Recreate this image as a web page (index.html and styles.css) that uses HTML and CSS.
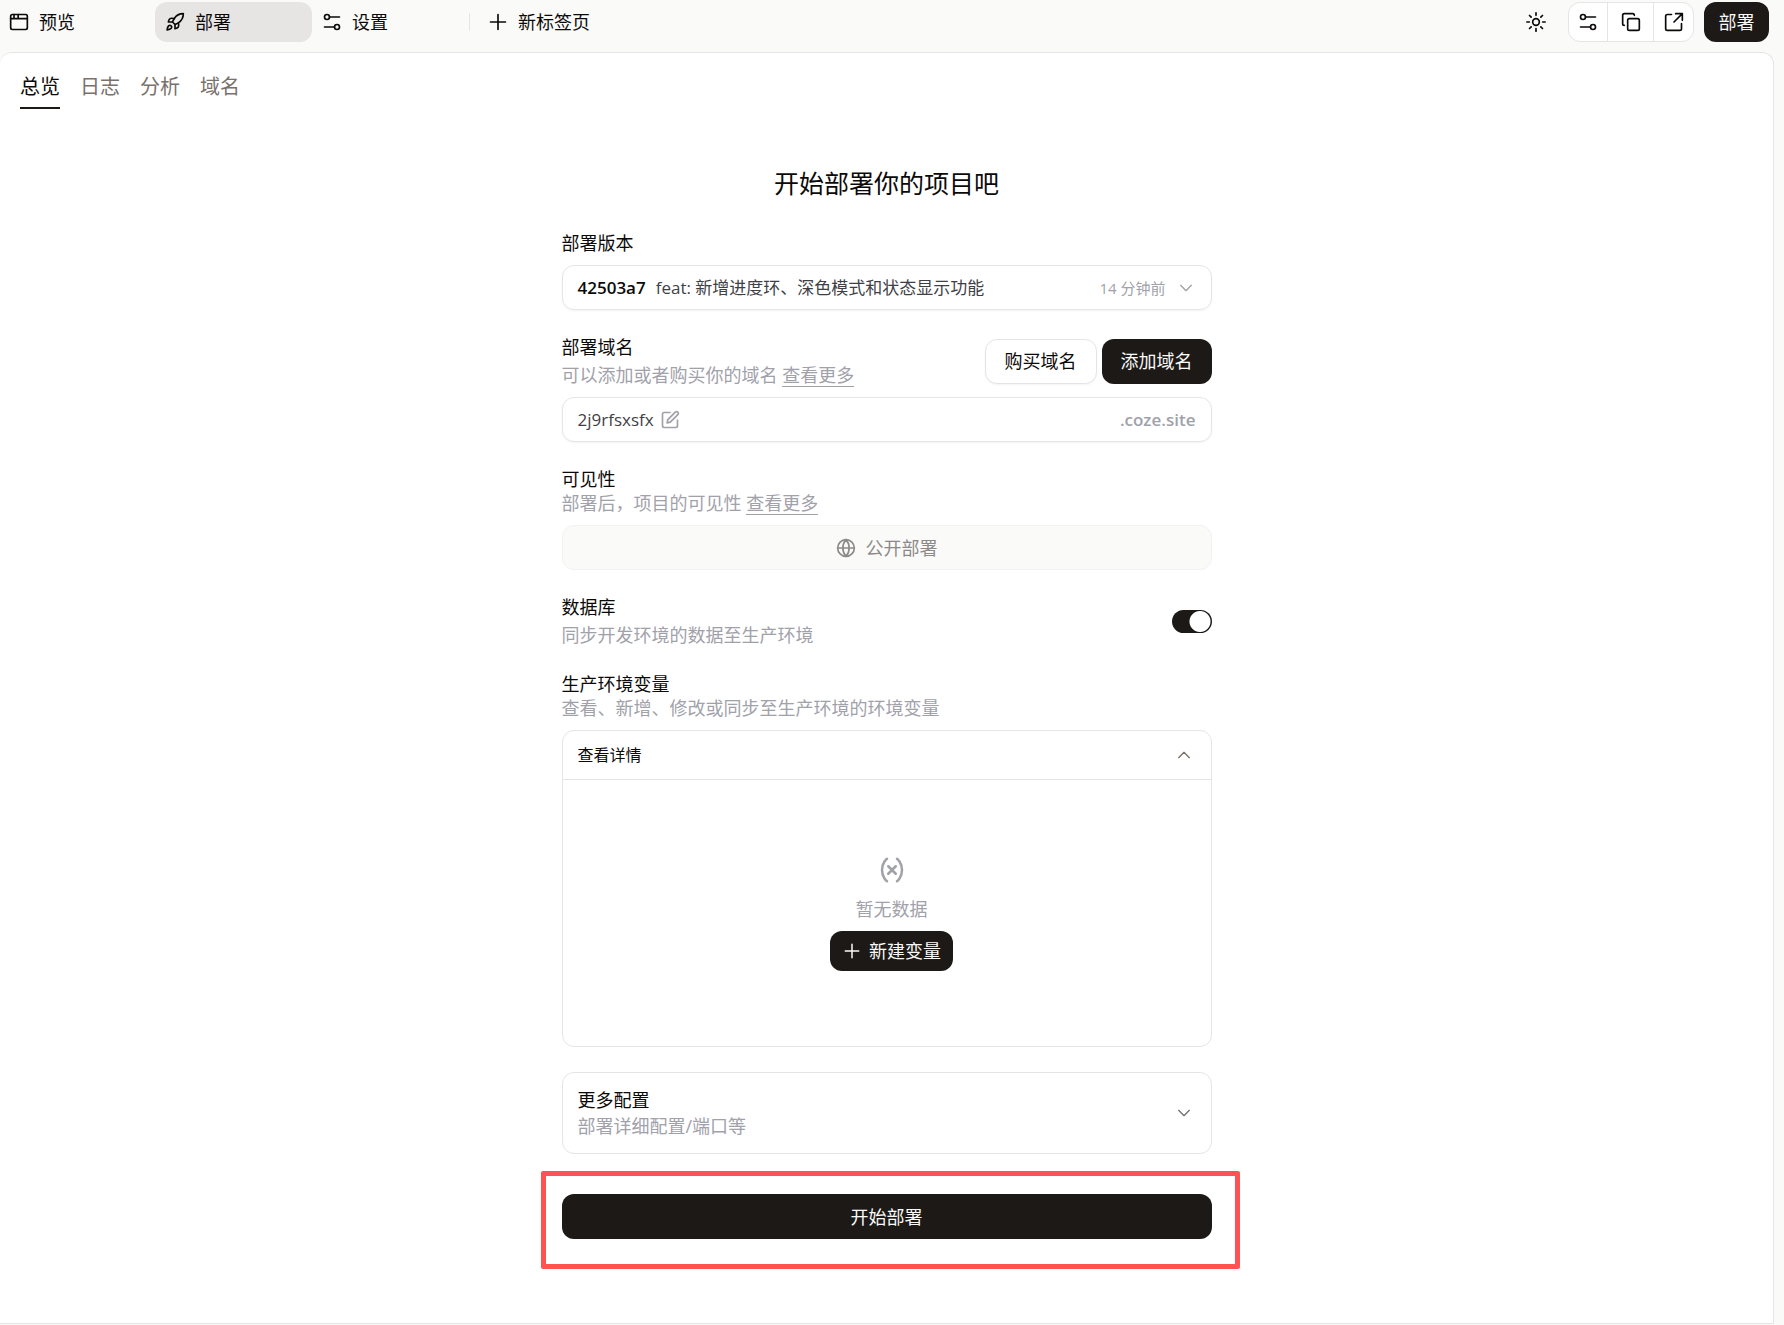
FILE: index.html
```html
<!DOCTYPE html>
<html lang="zh-CN">
<head>
  <meta charset="UTF-8">
  <meta name="viewport" content="width=device-width, initial-scale=1.0">
  <title>部署</title>
  <link rel="stylesheet" href="styles.css">
</head>
<body>
  <header class="topbar">
    <nav class="window-tabs">
      <button class="window-tab" type="button">
        <svg class="icon" viewBox="0 0 24 24"><rect x="2" y="3" width="20" height="18" rx="2"/><path d="M2 8h20M6 3v5M11 3v5"/></svg>
        预览
      </button>
      <button class="window-tab active" type="button">
        <svg class="icon" viewBox="0 0 24 24"><path d="M4.5 16.5c-1.5 1.26-2 5-2 5s3.74-.5 5-2c.71-.84.7-2.13-.09-2.91a2.18 2.18 0 0 0-2.91-.09z"/><path d="M12 15l-3-3a22 22 0 0 1 2-3.95A12.88 12.88 0 0 1 22 2c0 2.72-.78 7.5-6 11a22.35 22.35 0 0 1-4 2z"/><path d="M9 12H4s.55-3.03 2-4c1.62-1.08 5 0 5 0"/><path d="M12 15v5s3.03-.55 4-2c1.08-1.62 0-5 0-5"/></svg>
        部署
      </button>
      <button class="window-tab" type="button">
        <svg class="icon" viewBox="0 0 24 24"><path d="M9 6h12M3 18h12"/><circle cx="6" cy="6" r="3"/><circle cx="18" cy="18" r="3"/></svg>
        设置
      </button>
      <button class="new-tab" type="button">
        <svg class="icon" viewBox="0 0 24 24"><path d="M3 12h18M12 3v18"/></svg>
        新标签页
      </button>
    </nav>

    <div class="actions">
      <button class="theme-btn" type="button" aria-label="主题">
        <svg class="icon" viewBox="0 0 24 24"><circle cx="12" cy="12" r="4"/><path d="M12 1v3M12 20v3M4.2 4.2l2 2M17.8 17.8l2 2M1 12h3M20 12h3M6.2 17.8l-2 2M19.8 4.2l-2 2"/></svg>
      </button>
      <div class="btn-group">
        <button type="button" aria-label="设置">
          <svg class="icon" viewBox="0 0 24 24"><path d="M9 6h12M3 18h12"/><circle cx="6" cy="6" r="3"/><circle cx="18" cy="18" r="3"/></svg>
        </button>
        <button type="button" aria-label="复制">
          <svg class="icon" viewBox="0 0 24 24"><rect x="8" y="8" width="14" height="14" rx="2"/><path d="M4 16a2 2 0 0 1-2-2V4a2 2 0 0 1 2-2h10a2 2 0 0 1 2 2"/></svg>
        </button>
        <button type="button" aria-label="新窗口打开">
          <svg class="icon" viewBox="0 0 24 24"><path d="M14 2h8v8M22 2L12 12M9 3H4a2 2 0 0 0-2 2v15a2 2 0 0 0 2 2h15a2 2 0 0 0 2-2v-6"/></svg>
        </button>
      </div>
      <button class="btn btn-dark btn-deploy" type="button">部署</button>
    </div>
  </header>

  <main class="panel">
    <nav class="page-tabs">
      <a class="active" href="#overview">总览</a>
      <a href="#logs">日志</a>
      <a href="#analytics">分析</a>
      <a href="#domains">域名</a>
    </nav>

    <form class="deploy-form">
      <h1>开始部署你的项目吧</h1>

      <section>
        <label class="label" for="version">部署版本</label>
        <div class="field">
          <strong class="hash">42503a7</strong>
          <select id="version">
            <option>feat: 新增进度环、深色模式和状态显示功能</option>
          </select>
          <span class="time">14 分钟前</span>
          <svg class="icon chevron light" viewBox="0 0 24 24"><path d="M4 8l8 8 8-8"/></svg>
        </div>
      </section>

      <section>
        <div class="section-head">
          <div class="head-text">
            <label class="label" for="domain">部署域名</label>
            <p class="desc">可以添加或者购买你的域名 <a href="#domain-help">查看更多</a></p>
          </div>
          <div class="head-buttons">
            <button class="btn btn-light" type="button">购买域名</button>
            <button class="btn btn-dark" type="button">添加域名</button>
          </div>
        </div>
        <div class="field">
          <input class="domain-input" id="domain" type="text" value="2j9rfsxsfx">
          <svg class="icon edit" viewBox="0 0 24 24"><path d="M12 3H5a2 2 0 0 0-2 2v14a2 2 0 0 0 2 2h14a2 2 0 0 0 2-2v-7"/><path d="M18.4 2.6a2.1 2.1 0 0 1 3 3L12.4 14.6 8.5 15.5l.9-3.9z"/></svg>
          <span class="suffix">.coze.site</span>
        </div>
      </section>

      <section>
        <h2 class="label">可见性</h2>
        <p class="desc">部署后，项目的可见性 <a href="#visibility-help">查看更多</a></p>
        <button class="btn public-btn" type="button" disabled>
          <svg class="icon" viewBox="0 0 24 24"><circle cx="12" cy="12" r="10"/><path d="M2 12h20M12 2a15 15 0 0 0 0 20 15 15 0 0 0 0-20"/></svg>
          公开部署
        </button>
      </section>

      <section class="section-head">
        <div class="head-text">
          <label class="label" for="database">数据库</label>
          <p class="desc">同步开发环境的数据至生产环境</p>
        </div>
        <input class="switch" id="database" type="checkbox" role="switch" checked>
      </section>

      <section>
        <h2 class="label">生产环境变量</h2>
        <p class="desc">查看、新增、修改或同步至生产环境的环境变量</p>
        <div class="card">
          <button class="card-head" type="button">
            查看详情
            <svg class="icon chevron" viewBox="0 0 24 24"><path d="M4 16l8-8 8 8"/></svg>
          </button>
          <div class="empty">
            <svg class="icon icon-empty" viewBox="0 0 24 24"><path d="M8 21s-4-3-4-9 4-9 4-9M16 3s4 3 4 9-4 9-4 9M15 9l-6 6M9 9l6 6"/></svg>
            <p class="desc">暂无数据</p>
            <button class="btn btn-dark btn-new" type="button">
              <svg class="icon" viewBox="0 0 24 24"><path d="M3 12h18M12 3v18"/></svg>
              新建变量
            </button>
          </div>
        </div>
      </section>

      <button class="card more" type="button">
        <span class="more-text">
          <span class="label">更多配置</span>
          <span class="desc">部署详细配置/端口等</span>
        </span>
        <svg class="icon chevron" viewBox="0 0 24 24"><path d="M4 8l8 8 8-8"/></svg>
      </button>

      <div class="submit">
        <button class="btn btn-dark" type="submit">开始部署</button>
      </div>
    </form>
  </main>
</body>
</html>
```

FILE: styles.css
```css
* {
  box-sizing: border-box;
}

body {
  margin: 0;
  min-height: 100vh;
  display: flex;
  flex-direction: column;
  background: #fafaf9;
  color: #0c0a09;
  font-family: "Open Sans", "Noto Sans CJK SC", sans-serif;
  font-size: 18px;
  line-height: 24px;
}

h1, h2, p {
  margin: 0;
}

button, input, select {
  margin: 0;
  padding: 0;
  border: 0;
  background: none;
  color: inherit;
  font: inherit;
}

button {
  cursor: pointer;
}

.icon {
  width: 20px;
  height: 20px;
  flex: none;
  fill: none;
  stroke: currentColor;
  stroke-width: 2;
  stroke-linecap: round;
  stroke-linejoin: round;
}

/* top bar */
.topbar {
  display: flex;
  justify-content: space-between;
  padding: 2px 15px 10px 0;
}

.window-tabs, .actions {
  display: flex;
  align-items: center;
}

.window-tab {
  display: flex;
  align-items: center;
  gap: 10px;
  width: 157px;
  height: 40px;
  padding-left: 10px;
  border-radius: 12px;
}

.window-tab:first-child {
  width: 155px;
  padding-left: 9px;
}

.window-tab.active {
  background: #e7e5e4;
}

.new-tab {
  display: flex;
  align-items: center;
  gap: 10px;
  height: 18px;
  padding-left: 18px;
  border-left: 1px solid #e5e5e5;
}

.theme-btn {
  display: flex;
  margin-right: 22px;
}

.btn-group {
  display: flex;
  height: 40px;
  margin-right: 10px;
  border: 1px solid #e5e5e5;
  border-radius: 12px;
  background: #fff;
}

.btn-group button {
  display: flex;
  align-items: center;
  justify-content: center;
  width: 46px;
  border-left: 1px solid #e5e5e5;
}

.btn-group button:first-child {
  width: 38px;
  border-left: 0;
}

.btn-group button:last-child {
  width: 40px;
}

/* buttons */
.btn {
  display: flex;
  align-items: center;
  justify-content: center;
  height: 45px;
  padding: 0 19px;
  border-radius: 12px;
}

.btn-dark {
  background: #1c1917;
  color: #fafaf9;
}

.btn-light {
  border: 1px solid #e5e5e5;
  background: #fff;
  box-shadow: 0 1px 2px rgba(0, 0, 0, 0.05);
}

.btn-deploy {
  width: 65px;
  height: 40px;
  padding: 0;
}

/* panel */
.panel {
  flex: 1;
  margin-right: 10px;
  margin-bottom: 1px;
  padding-bottom: 80px;
  border: 1px solid #e5e5e5;
  border-left: 0;
  border-radius: 12px 12px 0 0;
  background: #fff;
}

.page-tabs {
  display: flex;
  gap: 20px;
  padding: 20px 20px 0;
}

.page-tabs a {
  padding-bottom: 6px;
  border-bottom: 2px solid transparent;
  color: #78716c;
  font-size: 20px;
  line-height: 28px;
  text-decoration: none;
}

.page-tabs .active {
  border-color: #1c1917;
  color: #0c0a09;
}

/* form */
.deploy-form {
  display: flex;
  flex-direction: column;
  gap: 25px;
  max-width: 650px;
  margin: 57px auto 0;
}

h1 {
  padding-bottom: 6px;
  font-size: 25px;
  font-weight: 400;
  line-height: 34px;
  text-align: center;
}

.label {
  display: block;
  color: #0c0a09;
  font-size: 18px;
  font-weight: 400;
}

.desc {
  color: #a1a1aa;
}

.desc a {
  display: inline-block;
  border-bottom: 1px solid #a1a1aa;
  color: inherit;
  line-height: 22px;
  text-decoration: none;
}

.field {
  display: flex;
  align-items: center;
  height: 45px;
  margin-top: 10px;
  padding: 0 15px;
  border: 1px solid #e5e5e5;
  border-radius: 12px;
  box-shadow: 0 1px 2px rgba(0, 0, 0, 0.05);
  color: #3f3f46;
  font-size: 17px;
}

.hash {
  margin-right: 10px;
  color: #0c0a09;
  font-weight: 600;
}

.field select {
  flex: 1;
  min-width: 0;
  appearance: none;
}

.time {
  color: #a1a1aa;
  font-size: 15px;
}

.chevron {
  width: 16px;
  height: 16px;
  margin-right: 4px;
  color: #78716c;
}

.chevron.light {
  margin-left: 12px;
  margin-right: 2px;
  color: #a1a1aa;
}

.domain-input {
  width: 82px;
}

.edit {
  color: #a1a1aa;
}

.suffix {
  margin-left: auto;
  color: #a1a1aa;
  font-weight: 600;
}

.section-head {
  display: flex;
  align-items: center;
  justify-content: space-between;
}

.head-text {
  display: grid;
  gap: 4px;
}

.head-buttons {
  display: flex;
  gap: 5px;
}

.public-btn {
  gap: 10px;
  width: 100%;
  margin-top: 10px;
  border: 1px solid #f2f2f1;
  background: #fafaf9;
  color: #8c8a88;
  cursor: default;
}

.switch {
  width: 40px;
  height: 23px;
  border-radius: 12px;
  background: radial-gradient(circle at 28px 50%, #fff 10px, #1c1917 11px);
  appearance: none;
}

.switch:not(:checked) {
  background: radial-gradient(circle at 12px 50%, #fff 10px, #d6d3d1 11px);
}

.card {
  border: 1px solid #e5e5e5;
  border-radius: 12px;
}

section .card {
  margin-top: 10px;
}

.card-head {
  display: flex;
  align-items: center;
  justify-content: space-between;
  width: 100%;
  height: 49px;
  padding: 0 15px;
  border-bottom: 1px solid #e5e5e5;
  font-size: 16px;
}

.card-head .chevron, .more .chevron {
  margin-right: 4px;
}

.empty {
  display: flex;
  flex-direction: column;
  align-items: center;
  padding: 75px 0 75px 10px;
}

.icon-empty {
  width: 30px;
  height: 30px;
  margin-bottom: 12px;
  color: #a1a1aa;
}

.btn-new {
  gap: 8px;
  height: 40px;
  margin-top: 10px;
  padding: 0 12px 0 13px;
}

.btn-new .icon {
  width: 18px;
  height: 18px;
}

.more {
  display: flex;
  align-items: center;
  justify-content: space-between;
  padding: 15px;
  text-align: left;
}

.more-text {
  display: grid;
  gap: 2px;
}

.submit {
  position: relative;
  margin-top: 15px;
}

.submit .btn {
  width: 100%;
}

/* highlight frame around the submit button */
.submit::before {
  content: "";
  position: absolute;
  inset: -23px -28px -30px -21px;
  border: 5px solid #ff5252;
  border-radius: 2px;
  pointer-events: none;
}
```
